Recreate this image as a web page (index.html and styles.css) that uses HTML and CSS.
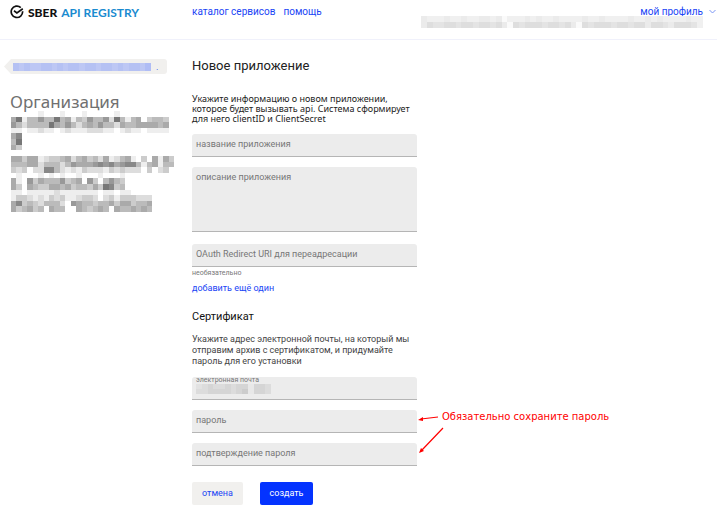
FILE: index.html
```html
<!DOCTYPE html>
<html lang="ru">
<head>
  <meta charset="UTF-8" />
  <meta name="viewport" content="width=device-width, initial-scale=1.0"/>
  <title>Sber API Registry</title>
  <link rel="stylesheet" href="styles.css">
</head>
<body>

  <header class="header">
    <a class="logo" href="#">
      <svg width="14" height="14" viewBox="0 0 14 14" fill="none" stroke="#111" stroke-width="1.7">
        <path d="M10.8 2.6A5.7 5.7 0 1 0 12.6 6.3"/>
        <path d="M4 5.8l2.9 2.1L12.8 3.8"/>
      </svg>
      <span class="logo-sber">SBER</span>
      <span class="logo-api">API REGISTRY</span>
    </a>
    <nav class="nav">
      <a href="#">каталог сервисов</a>
      <a href="#">помощь</a>
    </nav>
    <div class="profile">
      <a class="profile-link" href="#">мой профиль
        <svg width="7" height="5" viewBox="0 0 7 5" fill="none" stroke="#7b95f5"><path d="M0.5 1l3 3 3-3"/></svg>
      </a>
      <svg class="mosaic" id="userMosaic"></svg>
    </div>
  </header>

  <div class="page">
    <aside class="sidebar">
      <a class="back" href="#" aria-label="назад"><svg class="mosaic" id="backMosaic"></svg><span>.</span></a>
      <h2 class="org-title">Организация</h2>
      <svg class="mosaic" id="orgMosaic"></svg>
    </aside>

    <main>
      <form class="form">
        <h1>Новое приложение</h1>
        <p class="intro">Укажите информацию о новом приложении,<br>которое будет вызывать api. Система сформирует<br>для него clientID и ClientSecret</p>
        <input class="field" type="text" placeholder="название приложения" aria-label="название приложения">
        <textarea class="field area" placeholder="описание приложения" aria-label="описание приложения"></textarea>
        <input class="field" type="text" placeholder="OAuth Redirect URI для переадресации" aria-label="OAuth Redirect URI для переадресации">
        <div class="hint">необязательно</div>
        <a class="add" href="#">добавить ещё один</a>

        <h2>Сертификат</h2>
        <p class="cert">Укажите адрес электронной почты, на который мы<br>отправим архив с сертификатом, и придумайте<br>пароль для его установки</p>
        <div class="email">
          <label for="email">электронная почта</label>
          <div class="email-value">
            <svg class="mosaic" id="emailMosaic"></svg>
            <input id="email" type="email">
          </div>
        </div>
        <input class="field" type="password" placeholder="пароль" aria-label="пароль">
        <input class="field" type="password" placeholder="подтверждение пароля" aria-label="подтверждение пароля">
        <div class="buttons">
          <button class="cancel" type="button">отмена</button>
          <button class="create" type="submit">создать</button>
        </div>
      </form>

      <div class="note">
        <svg width="25" height="46" viewBox="0 0 25 46" stroke="#f00" fill="#f00">
          <path d="M21 5L4 7M26 16L5 38" fill="none" stroke-width="1.2"/>
          <path d="M1 8l5-3v4zM2 41l2-5 3 3z" stroke="none"/>
        </svg>
        <span>Обязательно сохраните пароль</span>
      </div>
    </main>
  </div>

  <script>
    // one hex digit per cell, f is left empty
    const org = [
      "fffffefffefffefffffeffffffffff",
      "a7ebb9bb7baebc9bb9d7bebafcbbcf",
      "9bdbbbb7ab9bdbab9bbdabbaaaabaf",
      "eefeedeefedeeedddeefedeefeeeef",
      "a8ffffffffffffffffffffffffffff",
      "b7ffffffffffffffffffffffffffff",
      "acffffffffffffffffffffffffffff",
      "ffffffffffffffffffffffffffffff",
      "aacaaedccbadbacbdaedbaefcfaeac",
      "bbbaadbbbdb9aaa9898a988bebaebb",
      "cdcfdd88bdedecdddecdcdddfcfdcf",
      "fefffefefeffefffefffefffffffff",
      "aef9cabbb9cbaf9cfb9bcfffffffff",
      "acfabccaabacbbcac78cbfffffffff",
      "eefeeeeedeeeeeeefeefeeffffffff",
      "eccdedecdceedccdfdcecccdddffff",
      "a8cbcdbbbdf9abbcbbacaacbbaffff",
      "acbacbfabbffabcbabfabbababffff"
    ];
    const user = [
      "2111211211221201112121121111211211112112121111211",
      "2433443443443420434443443420434443443442443244431"
    ];
    const email = ["1232232330332", "2233332340332"];
    const back = ["2323322323223223223232231"];

    const shades = ["#fafafa", "#f0f0f0", "#ebebeb", "#e4e4e4", "#dedede"];
    const emailShades = ["#e8e8e8", "#e2e2e2", "#dcdcdc", "#d5d5d5", "#cccccc"];
    const blues = ["#b5bdf5", "#b0bdf5", "#b5c1f3", "#bdc7f4"];

    function draw(id, rows, w, h, color) {
      const svg = document.getElementById(id);
      svg.setAttribute("viewBox", `0 0 ${rows[0].length} ${rows.length}`);
      svg.setAttribute("width", w);
      svg.setAttribute("height", h);
      svg.setAttribute("preserveAspectRatio", "none");
      rows.forEach((row, y) => [...row].forEach((c, x) => {
        if (c === "f") return;
        const r = document.createElementNS("http://www.w3.org/2000/svg", "rect");
        r.setAttribute("x", x);
        r.setAttribute("y", y);
        r.setAttribute("width", 1);
        r.setAttribute("height", 1);
        r.setAttribute("fill", color(c));
        svg.appendChild(r);
      }));
    }

    draw("orgMosaic", org, 163, 101, c => "#" + c + c + c);
    draw("userMosaic", user, 282, 12, c => shades[c]);
    draw("emailMosaic", email, 75, 10, c => emailShades[c]);
    draw("backMosaic", back, 138, 8, c => blues[c]);
  </script>

</body>
</html>
```
FILE: styles.css
```css
* {
  box-sizing: border-box;
}
body {
  margin: 0;
  background: #fff;
  font-family: Roboto, "Noto Sans", sans-serif;
  font-size: 9px;
  color: #222;
}
a {
  color: #1a45f5;
  text-decoration: none;
}
svg {
  display: block;
}
.mosaic {
  shape-rendering: crispEdges;
}
.header {
  display: grid;
  grid-template-columns: 182px auto 1fr;
  height: 40px;
  padding: 5px 0 0 10px;
  border-bottom: 1px solid #f0f1fb;
  font-size: 10px;
}
.logo {
  display: flex;
  align-items: center;
  gap: 4px;
  height: 14px;
  font-family: Lato, sans-serif;
  font-size: 12px;
  font-weight: bold;
}
.logo-sber {
  color: #111;
  font-weight: 900;
}
.logo-api {
  color: #1a8bd0;
}
.nav {
  display: flex;
  gap: 8px;
  line-height: 13px;
}
.profile {
  display: flex;
  flex-direction: column;
  align-items: flex-end;
}
.profile-link {
  display: flex;
  align-items: center;
  gap: 6px;
  padding-right: 1px;
  line-height: 13px;
}
.profile .mosaic {
  margin-right: 14px;
  margin-top: -2px;
}
.page {
  display: grid;
  grid-template-columns: 192px 1fr;
}
.sidebar {
  padding-top: 19px;
}
.back {
  display: flex;
  align-items: center;
  gap: 5px;
  width: 163px;
  height: 15px;
  margin-left: 4px;
  padding-left: 9px;
  background: #f1f0ee;
  border-radius: 3px;
  clip-path: polygon(0 50%, 7px 0, 100% 0, 100% 100%, 7px 100%);
}
.org-title {
  margin: 16px 0 0 10px;
  font-family: "Noto Sans", sans-serif;
  font-size: 17px;
  line-height: 24px;
  font-weight: normal;
  color: #707070;
}
#orgMosaic {
  margin: -3px 0 0 11px;
}
main {
  display: flex;
  align-items: flex-start;
}
.form {
  display: flex;
  flex-direction: column;
  width: 225px;
  padding-top: 17px;
}
h1 {
  margin: 0;
  font-size: 13px;
  line-height: 18px;
  font-weight: normal;
}
.intro {
  margin: 19px 0 10px;
  font-family: "Noto Sans", sans-serif;
  line-height: 10px;
  white-space: nowrap;
}
.field {
  width: 100%;
  height: 23px;
  margin: 0 0 10px;
  padding: 0 4px 2px;
  border: 0;
  border-bottom: 1px solid #b5b5b5;
  border-radius: 3px 3px 0 0;
  background: #ececec;
  font: inherit;
  outline: none;
}
.field::placeholder {
  color: #777;
  opacity: 1;
}
.area {
  height: 65px;
  margin-bottom: 12px;
  padding-top: 5px;
  resize: none;
}
.hint {
  margin-top: -10px;
  font-size: 7px;
  line-height: 12px;
  color: #777;
}
.add {
  margin-top: 3px;
  line-height: 12px;
}
h2 {
  margin: 15px 0 0;
  font-size: 11px;
  line-height: 16px;
  font-weight: normal;
  color: #111;
}
.cert {
  margin: 9px 0 10px;
  line-height: 11px;
  color: #444;
  white-space: nowrap;
}
.email {
  height: 23px;
  margin-bottom: 10px;
  padding: 0 4px;
  background: #ececec;
  border-bottom: 1px solid #b5b5b5;
  border-radius: 3px 3px 0 0;
  font-size: 7px;
  color: #777;
}
.email label {
  display: block;
  line-height: 7px;
}
.email-value {
  display: flex;
}
.email input {
  flex: 1;
  min-width: 0;
  height: 10px;
  padding: 0;
  border: 0;
  background: none;
}
.buttons {
  display: flex;
  gap: 17px;
  margin-top: 6px;
}
button {
  height: 23px;
  padding: 0 0 1px;
  border: 0;
  border-radius: 2px;
  font: inherit;
}
.cancel {
  width: 51px;
  background: #f1f0ee;
  color: #1a45f5;
}
.create {
  width: 53px;
  background: #0433ff;
  color: #fff;
}
.note {
  display: flex;
  margin-top: 372px;
  color: #f00;
  font-family: "DejaVu Sans", sans-serif;
  font-size: 10px;
  line-height: 10px;
  white-space: nowrap;
}
.note svg {
  overflow: visible;
}
```
